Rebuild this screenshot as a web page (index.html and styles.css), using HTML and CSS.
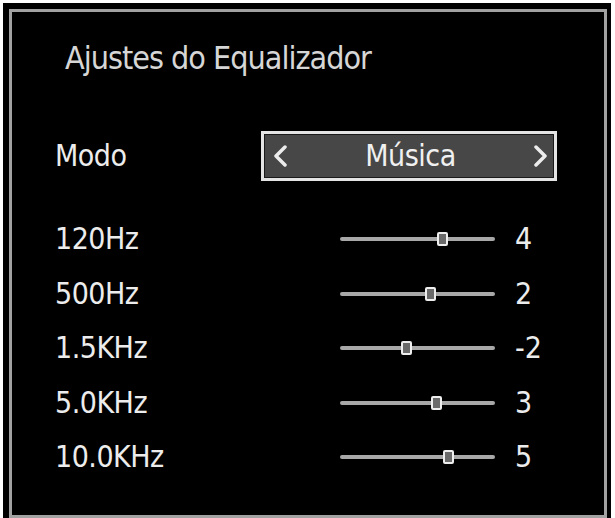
FILE: index.html
```html
<!DOCTYPE html>
<html lang="pt">
<head>
    <meta charset="UTF-8" />
    <title>Ajustes do Equalizador</title>
    <link rel="stylesheet" href="styles.css">
</head>
<body>

    <div class="tela">
        <div class="painel">
            <h1 class="titulo">Ajustes do Equalizador</h1>

            <div class="linha-modo">
                <span class="rotulo">Modo</span>
                <div class="seletor">
                    <svg class="seta" width="14" height="24" viewBox="0 0 14 24">
                        <polyline points="12,3 3,12 12,21" />
                    </svg>
                    <span class="valor-modo">Música</span>
                    <svg class="seta" width="14" height="24" viewBox="0 0 14 24">
                        <polyline points="2,3 11,12 2,21" />
                    </svg>
                </div>
            </div>

            <!-- cada ponto vale 6px a partir do centro do trilho -->
            <div class="bandas">
                <div class="banda">
                    <span class="rotulo">120Hz</span>
                    <div class="trilho"><span class="cursor" style="left: calc(50% + 24px)"></span></div>
                    <span class="valor">4</span>
                </div>
                <div class="banda">
                    <span class="rotulo">500Hz</span>
                    <div class="trilho"><span class="cursor" style="left: calc(50% + 12px)"></span></div>
                    <span class="valor">2</span>
                </div>
                <div class="banda">
                    <span class="rotulo">1.5KHz</span>
                    <div class="trilho"><span class="cursor" style="left: calc(50% - 12px)"></span></div>
                    <span class="valor">-2</span>
                </div>
                <div class="banda">
                    <span class="rotulo">5.0KHz</span>
                    <div class="trilho"><span class="cursor" style="left: calc(50% + 18px)"></span></div>
                    <span class="valor">3</span>
                </div>
                <div class="banda">
                    <span class="rotulo">10.0KHz</span>
                    <div class="trilho"><span class="cursor" style="left: calc(50% + 30px)"></span></div>
                    <span class="valor">5</span>
                </div>
            </div>
        </div>
    </div>

</body>
</html>
```

FILE: styles.css
```css
body {
    margin: 0;
    background-color: #ffffff;
    font-family: "DejaVu Sans Condensed", "DejaVu Sans", sans-serif;
}

.tela {
    margin: 3px 4px 0 3px;
    padding: 6px 4px 0 6px;
    background-color: #000;
    height: 515px;
    box-sizing: border-box;
}

.painel {
    border: 3px solid #a2a2a2;
    height: 509px;
    box-sizing: border-box;
    padding: 26px 0 0 43px;
    color: #ececec;
}

.titulo {
    margin: 0 0 0 10px;
    font-size: 32px;
    font-weight: normal;
    letter-spacing: -1px;
    line-height: 40px;
    color: #d6d6d6;
}

.rotulo {
    font-size: 30px;
    letter-spacing: -0.5px;
    line-height: 1;
}

.linha-modo {
    display: flex;
    align-items: center;
    margin-top: 53px;
    height: 50px;
}

.linha-modo .rotulo {
    width: 206px;
}

.seletor {
    display: flex;
    align-items: center;
    justify-content: space-between;
    width: 296px;
    height: 50px;
    box-sizing: border-box;
    padding: 0 6px 0 9px;
    border: 3px solid #e4e4e4;
    box-shadow: inset 0 0 0 1px #1a1a1a;
    background-color: #474747;
}

.valor-modo {
    font-size: 30px;
    letter-spacing: -0.5px;
    line-height: 1;
    color: #f0f0f0;
}

.seta polyline {
    fill: none;
    stroke: #ececec;
    stroke-width: 3.5;
    stroke-linecap: round;
    stroke-linejoin: round;
}

.bandas {
    margin-top: 31px;
}

.banda {
    display: flex;
    align-items: center;
    height: 54.5px;
}

.banda .rotulo {
    width: 285px;
}

.trilho {
    position: relative;
    width: 155px;
    height: 4px;
    border-radius: 2px;
    background-color: #a8a8a8;
}

.cursor {
    position: absolute;
    top: -5px;
    width: 11px;
    height: 14px;
    margin-left: -5px;
    box-sizing: border-box;
    border: 2px solid #eeeeee;
    border-radius: 2px;
    background-color: #6a6a6a;
}

.valor {
    margin-left: 20px;
    font-size: 30px;
    line-height: 1;
}
```
